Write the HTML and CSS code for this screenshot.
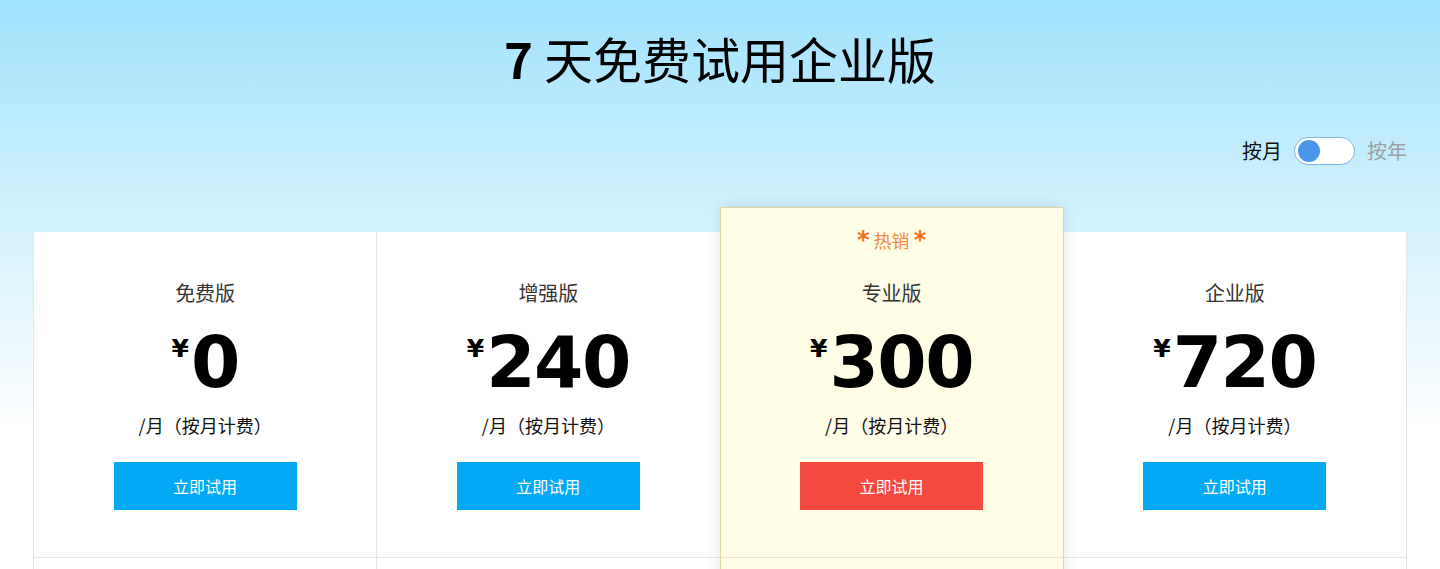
FILE: index.html
```html
<!DOCTYPE html>
<html lang="zh-CN">
<head>
<meta charset="utf-8">
<title>7 天免费试用企业版</title>
<link rel="stylesheet" href="styles.css">
</head>
<body>
<div class="page">
  <h1 class="title"><b>7</b> 天免费试用企业版</h1>
  <div class="billing">
    <span class="billing-label active">按月</span>
    <span class="switch"><span class="knob"></span></span>
    <span class="billing-label">按年</span>
  </div>
  <div class="plans">
    <div class="plan">
      <div class="plan-main">
        <div class="plan-name">免费版</div>
        <div class="price"><span class="yen">¥</span>0</div>
        <div class="unit">/月（按月计费）</div>
        <a class="btn">立即试用</a>
      </div>
      <div class="plan-features"></div>
    </div>
    <div class="plan">
      <div class="plan-main">
        <div class="plan-name">增强版</div>
        <div class="price"><span class="yen">¥</span>240</div>
        <div class="unit">/月（按月计费）</div>
        <a class="btn">立即试用</a>
      </div>
      <div class="plan-features"></div>
    </div>
    <div class="plan plan-hot">
      <div class="plan-main">
        <div class="hot"><b>*</b> 热销 <b>*</b></div>
        <div class="plan-name">专业版</div>
        <div class="price"><span class="yen">¥</span>300</div>
        <div class="unit">/月（按月计费）</div>
        <a class="btn btn-hot">立即试用</a>
      </div>
      <div class="plan-features"></div>
    </div>
    <div class="plan">
      <div class="plan-main">
        <div class="plan-name">企业版</div>
        <div class="price"><span class="yen">¥</span>720</div>
        <div class="unit">/月（按月计费）</div>
        <a class="btn">立即试用</a>
      </div>
      <div class="plan-features"></div>
    </div>
  </div>
</div>
</body>
</html>
```

FILE: styles.css
```css
html, body {
  margin: 0;
  padding: 0;
}
body {
  font-family: "Noto Sans CJK SC", "Noto Sans", sans-serif;
  color: #111;
  background: linear-gradient(to bottom, #a1e2fd 0px, #d3f2fd 225px, #ffffff 430px);
  background-repeat: no-repeat;
  min-height: 569px;
  overflow: hidden;
}
.page {
  padding: 0 33px;
}
.title {
  margin: 24px 0 0;
  font-size: 49px;
  line-height: 67px;
  font-weight: 400;
  text-align: center;
  color: #000;
}
.title b {
  font-weight: 700;
}
.billing {
  margin-top: 46px;
  height: 28px;
  display: flex;
  justify-content: flex-end;
  align-items: center;
  gap: 12px;
}
.billing-label {
  font-size: 20px;
  line-height: 28px;
  color: #999fa3;
}
.billing-label.active {
  color: #111;
}
.switch {
  height: 26px;
  width: 53px;
  border: 1px solid #80b5ee;
  border-radius: 14px;
  background: #fff;
  display: flex;
  align-items: center;
  padding: 0 3px;
  box-sizing: content-box;
}
.knob {
  width: 22px;
  height: 22px;
  border-radius: 50%;
  background: #4a97e9;
}
.plans {
  margin-top: 67px;
  display: grid;
  grid-template-columns: repeat(4, 1fr);
  border-left: 1px solid #e6e6e6;
}
.plan {
  background: #fff;
  border-right: 1px solid #e6e6e6;
  text-align: center;
}
.plan-main {
  padding: 47px 0 47px;
  display: flex;
  flex-direction: column;
  align-items: center;
}
.plan-name {
  font-size: 20px;
  line-height: 28px;
  color: #333;
}
.price {
  margin-top: 16px;
  font-family: "DejaVu Sans", sans-serif;
  font-weight: 700;
  font-size: 71px;
  line-height: 80px;
  color: #000;
  letter-spacing: -1.5px;
  display: flex;
  align-items: flex-start;
}
.yen {
  font-size: 25px;
  line-height: 25px;
  margin-top: 13px;
  margin-right: 2px;
  letter-spacing: 0;
}
.unit {
  margin-top: 9px;
  font-size: 18px;
  line-height: 26px;
  color: #111;
}
.btn {
  margin-top: 24px;
  width: 183px;
  height: 48px;
  line-height: 48px;
  background: #03a9f4;
  color: #fff;
  font-size: 16px;
  display: block;
  cursor: pointer;
}
.btn-hot {
  background: #f3493f;
}
.plan-features {
  border-top: 1px solid #e6e6e6;
  height: 120px;
}
.plan-hot {
  margin-top: -25px;
  margin-left: -1px;
  background: #fffde6;
  border: 1px solid #dcd8a6;
  border-bottom: none;
  box-shadow: 0 0 12px rgba(0, 0, 0, 0.12);
  position: relative;
  z-index: 1;
}
.plan-hot .plan-main {
  padding-top: 19px;
}
.plan-hot .plan-features {
  border-top-color: #ebe7c4;
}
.hot {
  font-size: 18px;
  line-height: 26px;
  color: #f58a3c;
  margin-bottom: 26px;
}
.hot b {
  color: #f47216;
  font-family: "DejaVu Sans", sans-serif;
  font-size: 24px;
  font-weight: 700;
}
```
